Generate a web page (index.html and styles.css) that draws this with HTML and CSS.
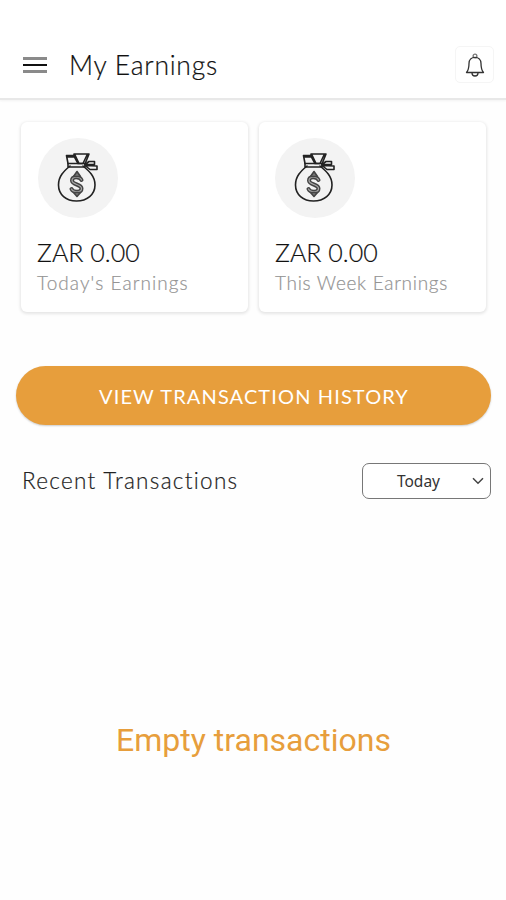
FILE: index.html
```html
<!DOCTYPE html>
<html lang="en">
<head>
<meta charset="utf-8">
<meta name="viewport" content="width=device-width, initial-scale=1">
<title>My Earnings</title>
<link rel="stylesheet" href="styles.css">
</head>
<body>
<svg width="0" height="0" class="defs" aria-hidden="true">
  <symbol id="bag" viewBox="0 0 44 54">
    <g fill="none" stroke="#222" stroke-width="1.6" stroke-linejoin="round" stroke-linecap="round">
      <path d="M14 15C8 20 2.500 25 2.500 34C2.500 43.500 10 50 20.500 50S39 43.500 39 34C39 25 33 20 27 15"/>
      <path d="M12 12.500L10.500 4.500H18M11 6H18.500L22 12.500M18 6V3H33L29 13M19 4L23 12.500H27L31 4"/>
      <path d="M12 12.500H29V16H12Z"/>
      <path d="M29 13.500L33 10.500H38.500V13.500H29M29 14.500L34 18.500H41V15L29 14.500"/>
      <path stroke="#444" d="M25.500 29C24 25.500 16 25 16 29.500C16 34 25.500 33 25.500 37.500C25.500 42 17 41.500 15.500 38" stroke-width="4"/>
      <path stroke="#aaa" d="M25.500 29C24 25.500 16 25 16 29.500C16 34 25.500 33 25.500 37.500C25.500 42 17 41.500 15.500 38" stroke-width="1.200"/>
      <path stroke="#444" fill="#777" d="M17.500 25.500L21 20.500L24.500 25.500ZM17.500 41.500L21 45.500L24.500 41.500Z"/>
    </g>
  </symbol>
</svg>
<header class="topbar">
  <button class="menu" aria-label="Menu"><span></span><span></span><span></span></button>
  <h1 class="title">My Earnings</h1>
  <button class="bell" aria-label="Notifications">
    <svg width="20" height="26" viewBox="0 0 20 26" fill="none" stroke="#333" stroke-width="1.300">
      <circle cx="10" cy="4" r="1.900" stroke="#777"/>
      <path d="M1.500 20.500C4 17.500 4 15 4 11.500C4 7.800 6.500 5.300 10 5.300S16 7.800 16 11.500C16 15 16 17.500 18.500 20.500Z" stroke-linejoin="round"/>
      <path d="M7 21C7 25 13 25 13 21"/>
    </svg>
  </button>
</header>
<main>
  <section class="cards">
    <article class="card">
      <div class="badge"><svg width="44" height="54"><use href="#bag"/></svg></div>
      <p class="amount">ZAR 0.00</p>
      <p class="label">Today's Earnings</p>
    </article>
    <article class="card">
      <div class="badge"><svg width="44" height="54"><use href="#bag"/></svg></div>
      <p class="amount">ZAR 0.00</p>
      <p class="label week">This Week Earnings</p>
    </article>
  </section>
  <button class="history">VIEW TRANSACTION HISTORY</button>
  <section class="recent">
    <h2 class="heading">Recent Transactions</h2>
    <button class="filter"><span>Today</span>
      <svg width="12" height="8" viewBox="0 0 12 8" fill="none" stroke="#444" stroke-width="1.500"><path d="M1 1.300L6 6.300L11 1.300"/></svg>
    </button>
  </section>
  <p class="empty">Empty transactions</p>
</main>
</body>
</html>
```
FILE: styles.css
```css
* { box-sizing: border-box; margin: 0; padding: 0; }
body { background: #fefefe; font-family: Lato, sans-serif; font-weight: 300; color: #111; height: 900px; overflow: hidden; }
button { font: inherit; color: inherit; border: 0; background: none; }
.defs { display: block; }
.topbar { display: flex; align-items: center; height: 100px; padding: 30px 12px 0 23px; background: #fff; border-bottom: 2px solid #e8e8e8; box-shadow: 0 1px 2px #f2f2f2; }
.menu { display: flex; flex-direction: column; gap: 4px; width: 24px; margin-top: 2px; }
.menu span { height: 3px; background: #8a8a8a; }
.menu span:nth-child(2) { height: 2px; background: #111; }
.title { margin-left: 22px; padding-top: 2px; font-size: 26.5px; font-weight: 300; line-height: 34px; letter-spacing: .75px; white-space: nowrap; -webkit-text-stroke: .2px; }
.bell { margin-left: auto; display: flex; align-items: center; justify-content: center; width: 39px; height: 37px; border: 1px solid #f5f5f5; border-radius: 5px; }
.bell svg { margin-top: 2px; }
.cards { display: grid; grid-template-columns: 227px 227px; gap: 11px; padding: 22px 0 0 21px; }
.card { height: 190px; padding: 16px; background: #fff; border-radius: 6px; box-shadow: 0 1px 3px 1px #e6e6e6; }
.badge { display: flex; align-items: center; justify-content: center; width: 80px; height: 80px; margin-left: 1px; border-radius: 50%; background: #f3f3f3; }
.card + .card .badge { margin-left: 0; }
.amount { margin-top: 18px; font-size: 25px; line-height: 32px; white-space: nowrap; -webkit-text-stroke: .2px; }
.label { margin-top: 1px; font-size: 19px; line-height: 28px; color: #949494; letter-spacing: 1.050px; white-space: nowrap; -webkit-text-stroke: .2px; }
.week { letter-spacing: .7px; }
.history { display: block; width: 475px; height: 59px; margin: 54px 0 0 16px; padding-left: 1px; border-radius: 30px; background: #e79e3c; color: #fff; font-size: 20px; font-weight: 400; letter-spacing: 1.120px; box-shadow: 0 1px 2px #ccc; }
.recent { display: flex; align-items: center; justify-content: space-between; margin: 38px 15px 0 22px; }
.heading { font-size: 22.5px; line-height: 30px; font-weight: 300; letter-spacing: 1.300px; color: #222; white-space: nowrap; -webkit-text-stroke: .2px; }
.filter { display: flex; align-items: center; justify-content: flex-end; width: 129px; height: 36px; padding-right: 6px; border: 1.500px solid #777; border-radius: 7px; background: #fff; font: 400 15.5px "Noto Sans", sans-serif; color: #333; }
.filter svg { margin-left: 32px; }
.empty { margin-top: 220px; padding-left: 1px; text-align: center; font: 400 32px/42px Roboto, sans-serif; color: #e79e3c; }
```
